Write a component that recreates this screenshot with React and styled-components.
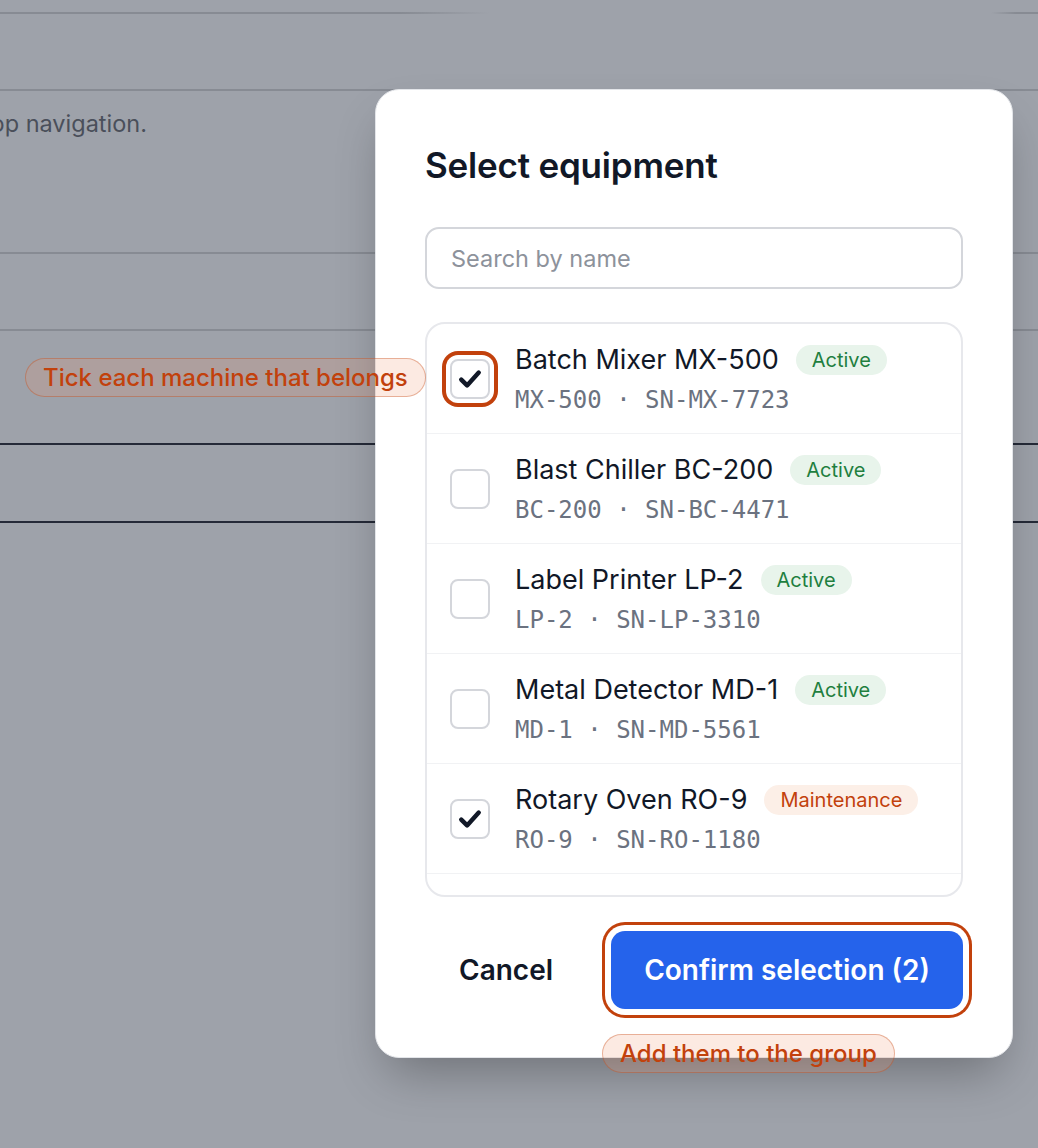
import React from "react";
import styled, { createGlobalStyle } from "styled-components";

const GlobalStyle = createGlobalStyle`
  html, body { margin: 0; padding: 0; }
  body {
    background: #9ea2aa;
    font-family: Inter, "Noto Sans", sans-serif;
    -webkit-font-smoothing: antialiased;
  }
  * { box-sizing: border-box; }
`;

const Page = styled.div`
  position: relative;
  width: 1038px;
  height: 1148px;
  overflow: hidden;
  background: #9ea2aa;
`;

const BgRow = styled.div`
  height: ${(p) => p.$h}px;
  border-bottom: 2px solid ${(p) => (p.$dark ? "#252a38" : "#878b93")};
  display: flex;
  align-items: flex-start;
`;

const TopRule = styled.div`
  height: 14px;
  border-bottom: 2px solid transparent;
  border-image: linear-gradient(
      to right,
      #878b93 0,
      #878b93 400px,
      rgba(135, 139, 147, 0) 490px,
      rgba(135, 139, 147, 0) 990px,
      #878b93 1015px
    )
    1;
`;

const BgTextClip = styled.div`
  width: 147px;
  overflow: hidden;
  display: flex;
  justify-content: flex-end;
  white-space: nowrap;
  margin-top: 18px;
  font-size: 23.5px;
  color: #4a4f5a;
`;

const Modal = styled.div`
  position: absolute;
  left: 375px;
  top: 89px;
  width: 638px;
  height: 969px;
  background: #fff;
  border: 1px solid #e3e5e9;
  border-radius: 24px;
  box-shadow: 0 25px 50px -12px rgba(0, 0, 0, 0.3);
  padding: 53px 49px 0 49px;
  display: flex;
  flex-direction: column;
`;

const Title = styled.h2`
  margin: 0;
  font-size: 35px;
  line-height: 44px;
  font-weight: 600;
  color: #111827;
  letter-spacing: -0.2px;
`;

const Search = styled.input`
  margin-top: 40px;
  height: 62px;
  width: 100%;
  border: 2px solid #d4d6db;
  border-radius: 14px;
  padding: 0 24px;
  font-family: Inter, sans-serif;
  font-size: 23.5px;
  color: #111827;
  outline: none;
  &::placeholder { color: #8d929b; }
`;

const List = styled.div`
  margin-top: 33px;
  height: 575px;
  border: 2px solid #e7e8ec;
  border-radius: 20px;
  overflow: hidden;
  display: flex;
  flex-direction: column;
`;

const Row = styled.div`
  flex: 0 0 110px;
  display: flex;
  align-items: center;
  gap: 25px;
  padding-left: 23px;
  border-bottom: 1px solid #f1f2f4;
`;

const Box = styled.div`
  flex: 0 0 40px;
  width: 40px;
  height: 40px;
  border: 2px solid #d4d6db;
  border-radius: 8px;
  display: flex;
  align-items: center;
  justify-content: center;
  background: #fff;
  box-shadow: ${(p) => (p.$ring ? "0 0 0 4px #fff, 0 0 0 8px #c2410c" : "none")};
`;

const Info = styled.div`
  display: flex;
  flex-direction: column;
  gap: 8px;
`;

const NameLine = styled.div`
  display: flex;
  align-items: center;
  gap: 17px;
  height: 34px;
`;

const Name = styled.span`
  font-size: 27px;
  color: #111827;
  white-space: nowrap;
`;

const Badge = styled.span`
  height: 30px;
  padding: 0 16px;
  border-radius: 15px;
  display: inline-flex;
  align-items: center;
  font-size: 20px;
  white-space: nowrap;
  background: ${(p) => p.$bg};
  color: ${(p) => p.$fg};
`;

const Mono = styled.span`
  font-family: "DejaVu Sans Mono", "Liberation Mono", monospace;
  font-size: 24px;
  line-height: 30px;
  color: #6b7280;
  white-space: pre;
`;

const Footer = styled.div`
  margin-top: 34px;
  display: flex;
  justify-content: flex-end;
  align-items: center;
  gap: 24px;
`;

const CancelBtn = styled.button`
  border: none;
  background: transparent;
  height: 78px;
  padding: 0 34px;
  font-family: Inter, sans-serif;
  font-size: 28px;
  font-weight: 600;
  color: #111827;
`;

const ConfirmBtn = styled.button`
  border: none;
  background: #2563eb;
  height: 78px;
  width: 352px;
  border-radius: 14px;
  font-family: Inter, sans-serif;
  font-size: 28px;
  font-weight: 600;
  color: #fff;
  box-shadow: 0 0 0 6px #fff, 0 0 0 9px #c2410c;
`;

const Note = styled.div`
  position: absolute;
  left: ${(p) => p.$x}px;
  top: ${(p) => p.$y}px;
  height: 39px;
  padding: 0 17px;
  border-radius: 20px;
  display: flex;
  align-items: center;
  background: rgba(240, 150, 110, 0.2);
  border: 1.5px solid rgba(194, 65, 12, 0.35);
  color: #c2410c;
  font-size: 24px;
  font-weight: 500;
  white-space: nowrap;
`;

const badgeColors = {
  Active: ["#e8f4eb", "#1f7f3f"],
  Maintenance: ["#fcefe7", "#c2410c"],
  Offline: ["#fde4e4", "#b91c1c"],
};

const items = [
  { name: "Batch Mixer MX-500", status: "Active", meta: "MX-500 · SN-MX-7723", checked: true, ring: true },
  { name: "Blast Chiller BC-200", status: "Active", meta: "BC-200 · SN-BC-4471" },
  { name: "Label Printer LP-2", status: "Active", meta: "LP-2 · SN-LP-3310" },
  { name: "Metal Detector MD-1", status: "Active", meta: "MD-1 · SN-MD-5561" },
  { name: "Rotary Oven RO-9", status: "Maintenance", meta: "RO-9 · SN-RO-1180", checked: true },
  { name: "Vacuum Sealer VS-7", status: "Offline", meta: "VS-7 · SN-VS-2209" },
];

const Check = () => (
  <svg width="28" height="28" viewBox="0 0 24 24" fill="none">
    <path d="M4.5 12.5l5 5L19.5 6.5" stroke="#111827" strokeWidth="3.8" strokeLinecap="round" strokeLinejoin="round" />
  </svg>
);

export default function App() {
  return (
    <Page>
      <GlobalStyle />
      <TopRule />
      <BgRow $h={77} />
      <BgRow $h={163}>
        <BgTextClip>Reorder steps with drag-and-drop navigation.</BgTextClip>
      </BgRow>
      <BgRow $h={77} />
      <BgRow $h={114} $dark />
      <BgRow $h={78} $dark />

      <Modal>
        <Title>Select equipment</Title>
        <Search placeholder="Search by name" />
        <List>
          {items.map((it) => {
            const [bg, fg] = badgeColors[it.status];
            return (
              <Row key={it.name}>
                <Box $ring={it.ring}>{it.checked && <Check />}</Box>
                <Info>
                  <NameLine>
                    <Name>{it.name}</Name>
                    <Badge $bg={bg} $fg={fg}>{it.status}</Badge>
                  </NameLine>
                  <Mono>{it.meta}</Mono>
                </Info>
              </Row>
            );
          })}
        </List>
        <Footer>
          <CancelBtn>Cancel</CancelBtn>
          <ConfirmBtn>Confirm selection (2)</ConfirmBtn>
        </Footer>
      </Modal>

      <Note $x={25} $y={358}>Tick each machine that belongs</Note>
      <Note $x={602} $y={1034}>Add them to the group</Note>
    </Page>
  );
}
